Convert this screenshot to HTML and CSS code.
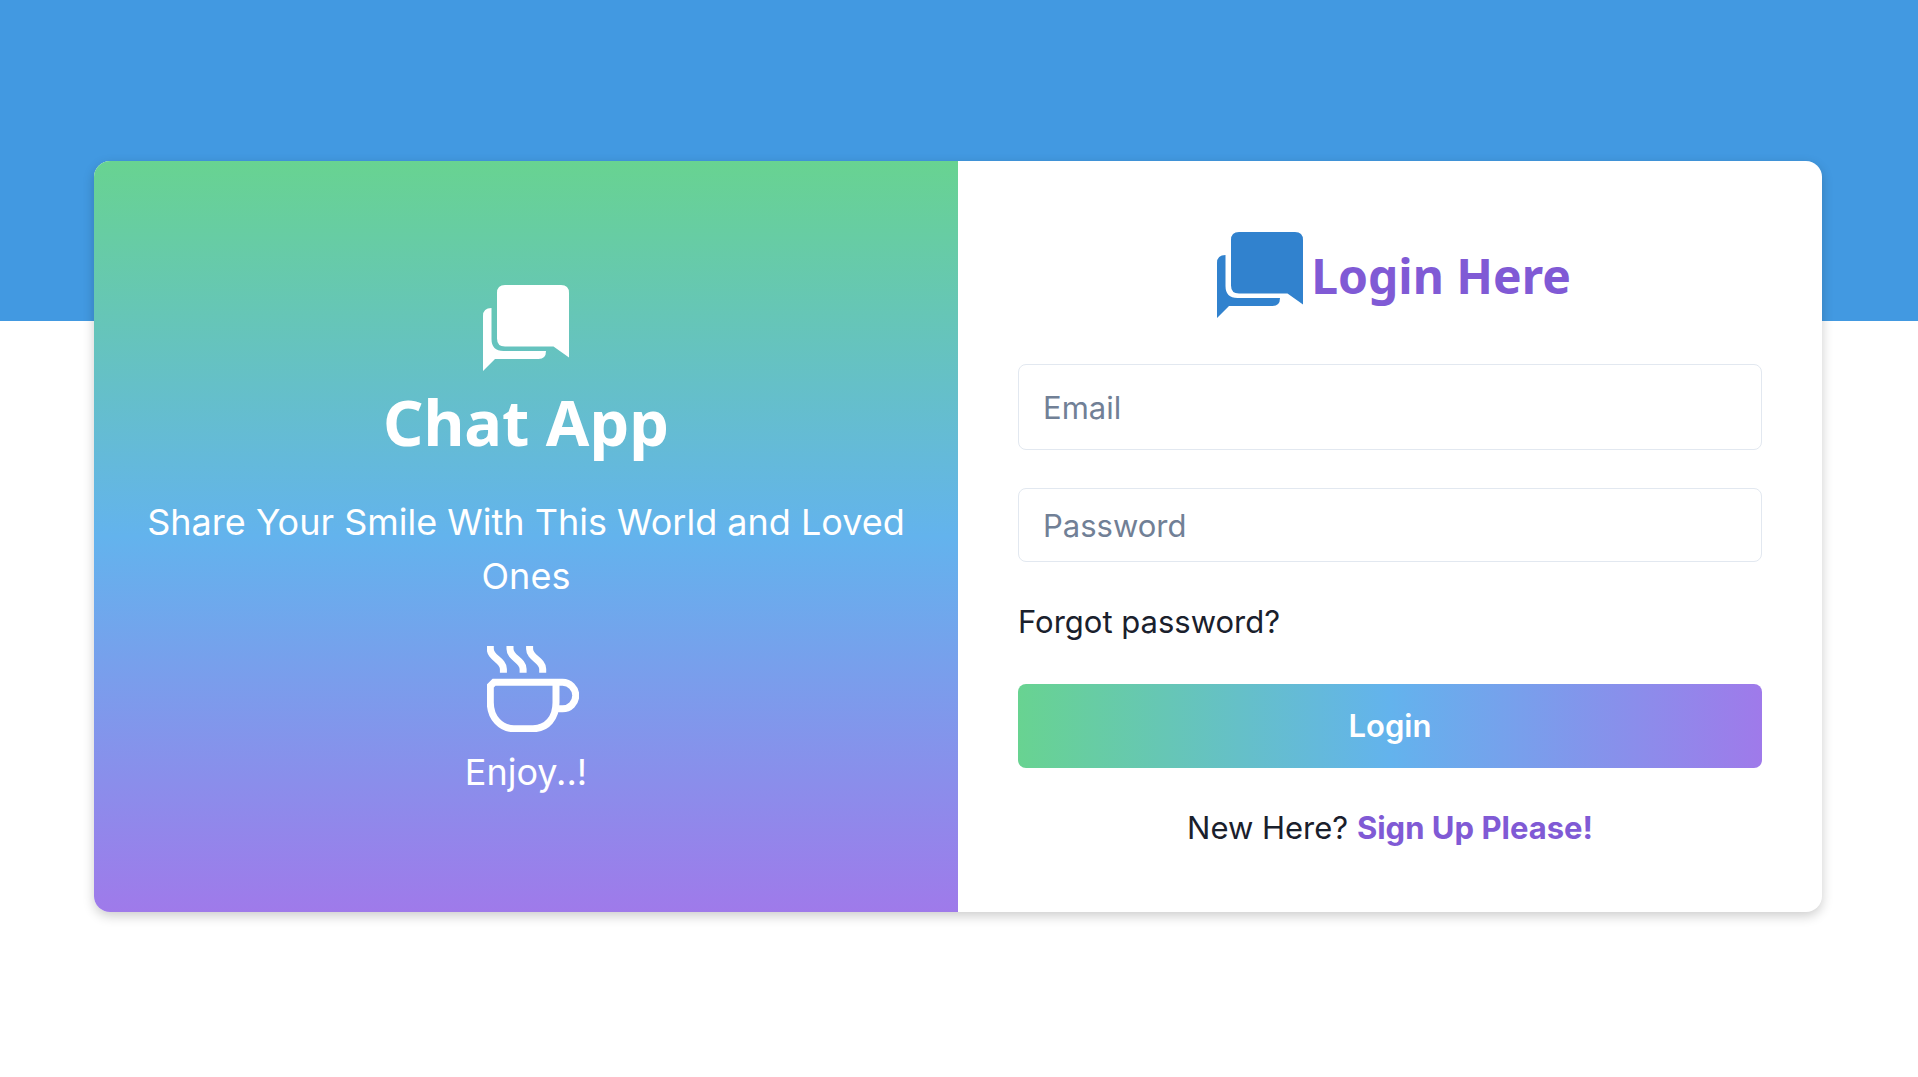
FILE: index.html
```html
<!DOCTYPE html>
<html lang="en">
<head>
<meta charset="utf-8">
<meta name="viewport" content="width=device-width, initial-scale=1">
<title>Chat App</title>
<link rel="stylesheet" href="styles.css">
</head>
<body>
<svg class="sprite" aria-hidden="true">
  <symbol id="chat" viewBox="0 0 86 86">
    <path d="M22 0H78Q86 0 86 8V72.500L70.500 61.500H22Q14 61.500 14 53.500V8Q14 0 22 0Z"/>
    <path d="M8.500 23V54Q8.500 66 20.500 66H63Q63 74 55.500 74H12L0 86V31Q0 23 8.500 23Z"/>
  </symbol>
</svg>
<main class="page">
  <div class="card">
    <section class="welcome">
      <svg class="icon" aria-hidden="true"><use href="#chat"/></svg>
      <h1 class="brand">Chat App</h1>
      <p class="tagline">Share Your Smile With This World and Loved Ones</p>
      <svg class="cup" viewBox="0 0 92 86" aria-hidden="true">
        <path d="M3.300 40L7 36.300H69V56.500C69 72 60 82.700 46 82.700H27C14 82.700 3.300 72 3.300 56.500ZM69 36.300H75.500A13.200 13.200 0 0 1 75.500 62.800H70"/>
        <path d="M3.300 0V3C3.300 12 16.400 14 16.400 23V26.700M23 0V3C23 12 36.100 14 36.100 23V26.700M42.600 0V3C42.600 12 55.700 14 55.700 23V26.700"/>
      </svg>
      <p class="enjoy">Enjoy..!</p>
    </section>
    <section class="login">
      <header class="heading">
        <svg class="icon" aria-hidden="true"><use href="#chat"/></svg>
        <h2 class="title">Login Here</h2>
      </header>
      <form class="form">
        <input class="field field-email" type="email" placeholder="Email" aria-label="Email">
        <input class="field field-password" type="password" placeholder="Password" aria-label="Password">
        <a class="forgot" href="#">Forgot password?</a>
        <button class="submit" type="submit">Login</button>
      </form>
      <p class="signup">New Here? <a class="signup-link" href="#">Sign Up Please!</a></p>
    </section>
  </div>
</main>
</body>
</html>
```
FILE: styles.css
```css
* {
  box-sizing: border-box;
  margin: 0;
}

body {
  min-height: 100vh;
  background: linear-gradient(#4299e1, #4299e1) top / 100% 321px no-repeat #fff;
  color: #1a202c;
  font: 31px/48px Inter, "Liberation Sans", sans-serif;
}

a {
  color: inherit;
  text-decoration: none;
}

.sprite {
  display: none;
}

.page {
  padding: 161px 96px 80px 94px;
}

.card {
  display: grid;
  grid-template-columns: 1fr 1fr;
  overflow: hidden;
  border-radius: 16px;
  background: #fff;
  box-shadow: 0 4px 12px rgba(0, 0, 0, 0.2);
}

.icon {
  flex: none;
  width: 86px;
  height: 86px;
  fill: currentColor;
}

.welcome {
  display: flex;
  flex-direction: column;
  align-items: center;
  padding: 124px 48px 112px;
  background: linear-gradient(#68d391, #63b3ed, #9f7aea);
  color: #fff;
  font-size: 36px;
  line-height: 54px;
  text-align: center;
}

.brand {
  margin: 3px 0 25px;
  font: 700 63px/96px "Noto Sans", "Open Sans", sans-serif;
}

.cup {
  width: 92px;
  height: 86px;
  margin: 43px 0 13px 14px;
  fill: none;
  stroke: currentColor;
  stroke-width: 7;
}

.login {
  padding: 71px 60px 60px;
}

.heading {
  display: flex;
  align-items: center;
  justify-content: center;
  gap: 8px;
  margin-bottom: 46px;
  padding-left: 8px;
  color: #3182ce;
}

.title {
  padding-top: 2px;
  color: #805ad5;
  font: 700 48px/72px "Noto Sans", "Open Sans", sans-serif;
}

.form {
  display: flex;
  flex-direction: column;
}

.field {
  width: 100%;
  padding: 0 24px;
  border: 1px solid #e2e8f0;
  border-radius: 8px;
  background: #fff;
  color: inherit;
  font: inherit;
}

.field::placeholder {
  color: #718096;
  opacity: 1;
}

.field-email {
  height: 86px;
  margin-bottom: 38px;
}

.field-password {
  height: 74px;
  margin-bottom: 36px;
}

.forgot {
  align-self: flex-start;
  margin-bottom: 38px;
}

.submit {
  height: 84px;
  border: 0;
  border-radius: 8px;
  background: linear-gradient(to right, #68d391, #63b3ed, #9f7aea);
  color: #fff;
  font: inherit;
  font-weight: 600;
  cursor: pointer;
}

.signup {
  margin-top: 36px;
  text-align: center;
}

.signup-link {
  color: #805ad5;
  font-weight: 700;
}
```
